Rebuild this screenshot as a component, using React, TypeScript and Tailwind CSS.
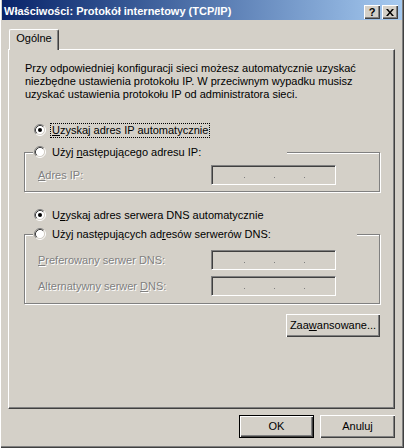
import type { ReactNode } from "react";

function Radio({ checked }: { checked?: boolean }) {
  return (
    <svg width="12" height="12" viewBox="0 0 12 12" className="shrink-0" aria-hidden>
      <circle cx="6" cy="6" r="4.5" fill="#fff" />
      <path d="M2.11 9.89A5.5 5.5 0 0 1 9.89 2.11" stroke="#808080" fill="none" />
      <path d="M9.89 2.11A5.5 5.5 0 0 1 2.11 9.89" stroke="#fff" fill="none" />
      <path d="M2.82 9.18A4.5 4.5 0 0 1 9.18 2.82" stroke="#404040" fill="none" />
      <path d="M9.18 2.82A4.5 4.5 0 0 1 2.82 9.18" stroke="#d4d0c8" fill="none" />
      {checked ? <circle cx="6" cy="6" r="2" fill="#000" /> : null}
    </svg>
  );
}

function RadioRow({
  checked,
  focused,
  children,
}: {
  checked?: boolean;
  focused?: boolean;
  children: ReactNode;
}) {
  return (
    <div className="flex h-[16px] items-center gap-[4px]">
      <Radio checked={checked} />
      <span
        className={
          focused
            ? "whitespace-nowrap border border-dotted border-black pl-[1px] pr-[1px] leading-[13px]"
            : "whitespace-nowrap border border-transparent pl-[1px] pr-[1px] leading-[13px]"
        }
      >
        {children}
      </span>
    </div>
  );
}

function IpField() {
  return (
    <div className="h-[20px] w-[125px] border border-t-[#808080] border-l-[#808080] border-r-white border-b-white shadow-[inset_1px_1px_#404040,inset_-1px_-1px_#d4d0c8]">
      <div className="flex gap-[29px] pl-[32px] pt-[11px]">
        <div className="h-px w-px bg-[#808080]" />
        <div className="h-px w-px bg-[#808080]" />
        <div className="h-px w-px bg-[#808080]" />
      </div>
    </div>
  );
}

function FieldRow({ label }: { label: ReactNode }) {
  return (
    <div className="flex h-[20px] items-center pl-[13px]">
      <span className="w-[173px] whitespace-nowrap text-[#808080] [text-shadow:1px_1px_0_#fff]">
        {label}
      </span>
      <IpField />
    </div>
  );
}

function Button({ children, isDefault, className }: { children: ReactNode; isDefault?: boolean; className?: string }) {
  return (
    <div className={`${className ?? ""} h-[23px] ${isDefault ? "border border-black" : ""}`}>
      <div className="flex h-full items-center justify-center shadow-[inset_1px_1px_#fff,inset_-1px_-1px_#404040,inset_-2px_-2px_#808080]">
        {children}
      </div>
    </div>
  );
}

export default function App() {
  return (
    <div className="flex h-[448px] w-[404px] flex-col bg-[#d4d0c8] pl-[2px] pr-[2px] font-['Liberation_Sans',Arial,sans-serif] text-[11px] text-black shadow-[inset_1px_0_#fff,inset_-1px_-1px_#404040,inset_-2px_-2px_#808080]">
      {/* caption */}
      <div className="flex h-[20px] items-start bg-gradient-to-r from-[#0a246a] to-[#a6caf0] pl-[2px] pr-[4px]">
        <span className="flex-1 whitespace-nowrap pt-[5px] text-[11px] font-bold leading-[13px] text-white">
          Właściwości: Protokół internetowy (TCP/IP)
        </span>
        <div className="mt-[5px] flex gap-[2px]">
          <div className="flex h-[14px] w-[16px] items-center justify-center bg-[#d4d0c8] text-[11px] font-bold leading-none shadow-[inset_1px_1px_#fff,inset_-1px_-1px_#404040,inset_-2px_-2px_#808080]">
            ?
          </div>
          <div className="flex h-[14px] w-[16px] items-center justify-center bg-[#d4d0c8] shadow-[inset_1px_1px_#fff,inset_-1px_-1px_#404040,inset_-2px_-2px_#808080]">
            <svg width="8" height="7" viewBox="0 0 8 7" aria-hidden>
              <path d="M0 0h2l2 2.5L6 0h2L5 3.5 8 7H6L4 4.5 2 7H0l3-3.5z" fill="#000" />
            </svg>
          </div>
        </div>
      </div>

      {/* tabs */}
      <div className="mt-[9px] flex pl-[7px]">
        <div className="relative -mb-px flex h-[21px] w-[50px] justify-center rounded-t-[2px] border-l border-t border-r border-l-white border-t-white border-r-[#404040] bg-[#d4d0c8] pt-[2px] leading-[13px] shadow-[inset_-1px_0_#808080]">
          Ogólne
        </div>
      </div>

      <div className="ml-[6px] h-[360px] w-[387px] border border-l-white border-t-white border-r-[#404040] border-b-[#404040] pt-[12px] shadow-[inset_-1px_-1px_#808080]">
        <p className="whitespace-nowrap pl-[16px] leading-[13px]">
          Przy odpowiedniej konfiguracji sieci możesz automatycznie uzyskać
          <br />
          niezbędne ustawienia protokołu IP. W przeciwnym wypadku musisz
          <br />
          uzyskać ustawienia protokołu IP od administratora sieci.
        </p>

        <div className="mt-[21px] pl-[25px]">
          <RadioRow checked focused>
            <u>U</u>zyskaj adres IP automatycznie
          </RadioRow>
        </div>

        <div className="ml-[15px] mt-[14px] h-[40px] w-[356px] border border-[#808080] shadow-[inset_1px_1px_#fff,1px_1px_#fff]">
          <div className="-mt-[9px] ml-[8px] w-[254px] bg-[#d4d0c8] pl-[1px]">
            <RadioRow>
              Użyj <u>n</u>astępującego adresu IP:
            </RadioRow>
          </div>
          <div className="mt-[5px]">
            <FieldRow
              label={
                <>
                  <u>A</u>dres IP:
                </>
              }
            />
          </div>
        </div>

        <div className="mt-[15px] pl-[25px]">
          <RadioRow checked>
            U<u>z</u>yskaj adres serwera DNS automatycznie
          </RadioRow>
        </div>

        <div className="ml-[15px] mt-[11px] h-[70px] w-[356px] border border-[#808080] shadow-[inset_1px_1px_#fff,1px_1px_#fff]">
          <div className="-mt-[9px] ml-[8px] w-[324px] bg-[#d4d0c8] pl-[1px]">
            <RadioRow>
              Użyj następujących ad<u>r</u>esów serwerów DNS:
            </RadioRow>
          </div>
          <div className="mt-[8px]">
            <FieldRow
              label={
                <>
                  <u>P</u>referowany serwer DNS:
                </>
              }
            />
          </div>
          <div className="mt-[6px]">
            <FieldRow
              label={
                <>
                  Alternatywny serwer <u>D</u>NS:
                </>
              }
            />
          </div>
        </div>

        <div className="ml-[277px] mt-[10px] w-[94px]">
          <Button>
            Zaa<u>w</u>ansowane...
          </Button>
        </div>
      </div>

      <div className="mr-[7px] mt-[6px] flex justify-end gap-[6px]">
        <Button isDefault className="w-[75px]">
          OK
        </Button>
        <Button className="w-[75px]">Anuluj</Button>
      </div>
    </div>
  );
}
